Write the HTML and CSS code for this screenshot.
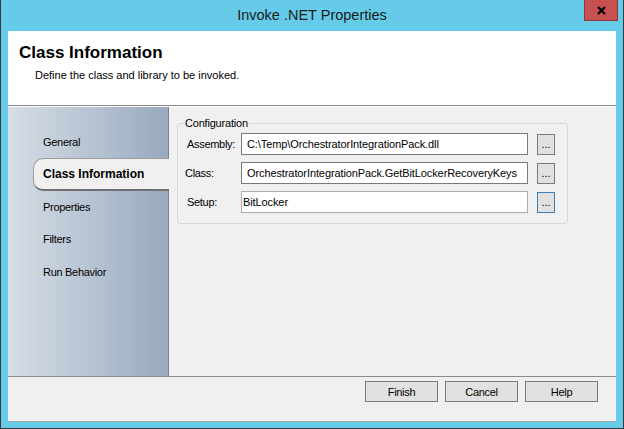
FILE: index.html
```html
<!DOCTYPE html>
<html>
<head>
<meta charset="utf-8">
<title>Invoke .NET Properties</title>
<link rel="stylesheet" href="styles.css">
</head>
<body>
<div class="window">
  <div class="titlebar">
    <span class="title">Invoke .NET Properties</span>
    <div class="close"><svg width="9" height="9" viewBox="0 0 9 9"><path d="M1 1L8 8M8 1L1 8" stroke="#000" stroke-width="2.2" fill="none"/></svg></div>
  </div>
  <div class="client">
    <div class="header">
      <div class="h-title">Class Information</div>
      <div class="h-desc">Define the class and library to be invoked.</div>
    </div>
    <div class="main">
      <nav class="sidebar">
        <div class="nav-item">General</div>
        <div class="nav-item active">Class Information</div>
        <div class="nav-item">Properties</div>
        <div class="nav-item">Filters</div>
        <div class="nav-item">Run Behavior</div>
      </nav>
      <section class="content">
        <div class="group">
          <div class="legend">Configuration</div>
          <div class="rows">
            <div class="row">
              <span class="label">Assembly:</span>
              <div class="textbox">C:\Temp\OrchestratorIntegrationPack.dll</div>
              <div class="browse">...</div>
            </div>
            <div class="row">
              <span class="label label-tight">Class:</span>
              <div class="textbox">OrchestratorIntegrationPack.GetBitLockerRecoveryKeys</div>
              <div class="browse">...</div>
            </div>
            <div class="row">
              <span class="label">Setup:</span>
              <div class="textbox textbox-light">BitLocker</div>
              <div class="browse browse-focus">...</div>
            </div>
          </div>
        </div>
      </section>
    </div>
    <div class="footer">
      <div class="btn">Finish</div>
      <div class="btn">Cancel</div>
      <div class="btn">Help</div>
    </div>
  </div>
</div>
</body>
</html>
```
FILE: styles.css
```css
* { box-sizing: border-box; margin: 0; padding: 0; }
html, body { width: 624px; height: 429px; overflow: hidden; }
body {
  background: #3c3c3c;
  font-family: "Liberation Sans", Arial, sans-serif;
  font-size: 11px;
  color: #000;
}
.window {
  width: 624px;
  height: 429px;
  background: #65cbe9;
  border: 1px solid #3b3b3b;
  border-top: 0;
  padding: 0 7px 6px;
  position: relative;
  display: flex;
  flex-direction: column;
}
.titlebar {
  height: 31px;
  display: flex;
  align-items: center;
  justify-content: center;
}
.title {
  font-size: 14.5px;
  line-height: 31px;
  color: #1b1b1b;
}
.close {
  position: absolute;
  top: 0;
  right: 5px;
  width: 34px;
  height: 21px;
  background: #c75050;
  border: 1px solid #8b3b3b;
  border-top: 0;
  display: flex;
  align-items: center;
  justify-content: center;
}
.client {
  flex: 1;
  display: flex;
  flex-direction: column;
  background: #f0f0f0;
}
.header {
  height: 75px;
  background: #fff;
  padding: 12px 0 0 11px;
  border-bottom: 1px solid #898989;
}
.h-title {
  font-size: 17px;
  font-weight: bold;
  line-height: 20px;
}
.h-desc {
  margin: 6px 0 0 16px;
  font-size: 11px;
  line-height: 13px;
}
.main {
  height: 270px;
  display: flex;
  border-top: 1px solid #fdfdfd;
}
.sidebar {
  width: 161px;
  padding-top: 18.5px;
  background: linear-gradient(to right, #d6dee6, #98aabf);
  border-right: 1px solid #7f7f7f;
}
.nav-item {
  height: 32.5px;
  margin-left: 25px;
  padding-left: 10px;
  display: flex;
  align-items: center;
  letter-spacing: -0.3px;
}
.nav-item.active {
  background: #f0f0f0;
  border: 1px solid #9c9c9c;
  border-right: 0;
  border-bottom: 2px solid #6f6f6f;
  border-radius: 10px 0 0 10px;
  margin-right: -1px;
  padding-left: 9px;
  font-weight: bold;
  font-size: 12px;
  letter-spacing: 0;
}
.content {
  flex: 1;
  padding: 16px 0 0 8px;
}
.group {
  width: 391px;
  border: 1px solid #d5d9dd;
  border-radius: 3px;
  padding-bottom: 10px;
}
.legend {
  width: fit-content;
  margin: -8px 0 0 6px;
  padding: 0 1px;
  background: #f0f0f0;
  line-height: 14px;
  letter-spacing: -0.2px;
}
.rows {
  margin-top: 3px;
  display: flex;
  flex-direction: column;
  gap: 7px;
}
.row {
  height: 22px;
  display: flex;
  align-items: center;
}
.label {
  width: 63px;
  padding-left: 9px;
  letter-spacing: -0.3px;
}
.label-tight { padding-left: 7px; }
.textbox {
  width: 287px;
  height: 22px;
  background: #fff;
  border: 1px solid #7a7a7a;
  padding-left: 5px;
  display: flex;
  align-items: center;
  white-space: nowrap;
  overflow: hidden;
  letter-spacing: -0.1px;
}
.textbox-light {
  border-color: #acacac;
  padding-left: 1px;
}
.browse {
  width: 18px;
  height: 21px;
  margin-left: 9px;
  align-self: flex-end;
  background: #e1e1e1;
  border: 1px solid #7a7a7a;
  text-align: center;
  line-height: 19px;
  font-size: 11px;
}
.browse-focus { border-color: #3c7fb1; }
.footer {
  height: 46px;
  display: flex;
  justify-content: flex-end;
  align-items: flex-start;
  gap: 7px;
  padding: 4px 18px 0 0;
  border-top: 1px solid #8c8c8c;
  border-bottom: 1px solid #a6a6a6;
}
.btn {
  width: 73px;
  height: 21px;
  background: #e1e1e1;
  border: 1px solid #7a7a7a;
  display: flex;
  align-items: center;
  justify-content: center;
  letter-spacing: -0.3px;
}
```
